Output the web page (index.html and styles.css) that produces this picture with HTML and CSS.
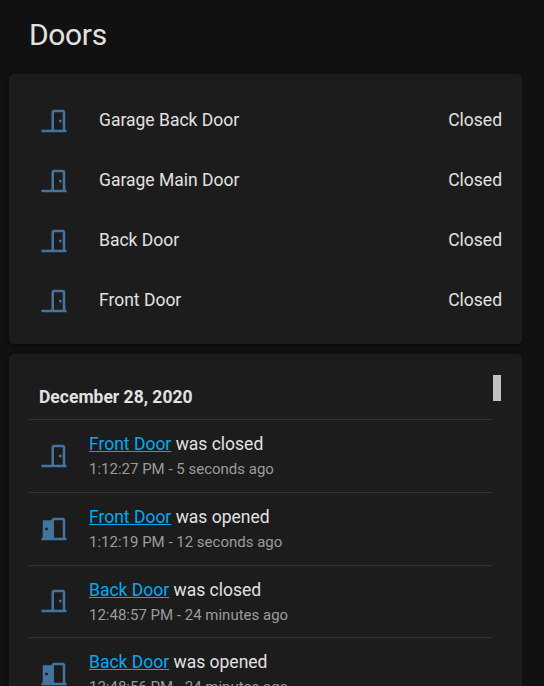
FILE: index.html
```html
<!DOCTYPE html>
<html lang="en">
<head>
<meta charset="utf-8">
<title>Doors</title>
<link rel="stylesheet" href="styles.css">
</head>
<body>
<svg class="sprite" aria-hidden="true">
  <symbol id="door-closed" viewBox="0 0 24 24"><path d="M16,11H18V13H16V11M12,3H19C20.11,3 21,3.89 21,5V19H22V21H2V19H10V5C10,3.89 10.89,3 12,3M12,5V19H19V5H12Z"/></symbol>
  <symbol id="door-open" viewBox="0 0 24 24"><path d="M12,3C10.89,3 10,3.89 10,5H3V19H2V21H22V19H21V5C21,3.89 20.11,3 19,3H12M12,5H19V19H12V5M5,11H7V13H5V11Z"/></symbol>
</svg>
<main class="view">
  <h1 class="title">Doors</h1>
  <section class="card entities">
    <div class="row"><svg class="icon"><use href="#door-closed"/></svg><span class="name">Garage Back Door</span><span class="state">Closed</span></div>
    <div class="row"><svg class="icon"><use href="#door-closed"/></svg><span class="name">Garage Main Door</span><span class="state">Closed</span></div>
    <div class="row"><svg class="icon"><use href="#door-closed"/></svg><span class="name">Back Door</span><span class="state">Closed</span></div>
    <div class="row"><svg class="icon"><use href="#door-closed"/></svg><span class="name">Front Door</span><span class="state">Closed</span></div>
  </section>
  <section class="card logbook">
    <div class="log">
      <h2 class="date">December 28, 2020</h2>
      <div class="entry"><svg class="icon"><use href="#door-closed"/></svg><div class="message"><div class="event"><a class="link" href="#">Front Door</a> was closed</div><div class="time">1:12:27 PM - 5 seconds ago</div></div></div>
      <div class="entry"><svg class="icon"><use href="#door-open"/></svg><div class="message"><div class="event"><a class="link" href="#">Front Door</a> was opened</div><div class="time">1:12:19 PM - 12 seconds ago</div></div></div>
      <div class="entry"><svg class="icon"><use href="#door-closed"/></svg><div class="message"><div class="event"><a class="link" href="#">Back Door</a> was closed</div><div class="time">12:48:57 PM - 24 minutes ago</div></div></div>
      <div class="entry"><svg class="icon"><use href="#door-open"/></svg><div class="message"><div class="event"><a class="link" href="#">Back Door</a> was opened</div><div class="time">12:48:56 PM - 24 minutes ago</div></div></div>
    </div>
    <div class="thumb"></div>
  </section>
</main>
</body>
</html>
```
FILE: styles.css
```css
* {
  box-sizing: border-box;
}

body {
  margin: 0;
  height: 686px;
  overflow: hidden;
  background: #111111;
  color: #e1e1e1;
  font-family: Roboto, "Liberation Sans", sans-serif;
  font-size: 17.5px;
}

.sprite {
  display: none;
}

.view {
  height: 686px;
  overflow: hidden;
  padding: 0 22px 0 9px;
}

.title {
  height: 74px;
  margin: 0;
  padding: 10px 20px 0;
  font-size: 30px;
  font-weight: 400;
  line-height: 50px;
  letter-spacing: -0.36px;
}

.card {
  background: #1c1c1c;
  border-radius: 5px;
  box-shadow: 0 2px 2px rgba(0, 0, 0, 0.14), 0 1px 5px rgba(0, 0, 0, 0.12), 0 3px 1px -2px rgba(0, 0, 0, 0.2);
}

.entities {
  display: grid;
  gap: 10px;
  height: 270px;
  padding: 20px;
}

.row {
  display: flex;
  align-items: center;
  padding-left: 10px;
}

.icon {
  flex: none;
  width: 30px;
  height: 30px;
  fill: #44739e;
}

.row .icon {
  margin-top: 4px;
}

.name,
.state {
  padding-top: 2px;
}

.name {
  flex: 1;
  margin-left: 30px;
}

.logbook {
  display: flex;
  height: 440px;
  margin-top: 10px;
  padding: 20px 20px 0;
}

.log {
  flex: 1;
}

.date {
  height: 45px;
  margin: 0;
  padding: 11px 10px 0;
  font-size: 17.5px;
  font-weight: 700;
  line-height: 25px;
}

.entry {
  display: flex;
  align-items: center;
  height: 72.75px;
  padding-left: 10px;
  border-top: 1px solid #343434;
}

.message {
  margin-left: 20px;
  padding-top: 2.4px;
}

.event {
  line-height: 25px;
}

.link {
  color: #03a9f4;
}

.time {
  color: #9b9b9b;
  font-size: 15px;
  line-height: 25px;
}

.thumb {
  width: 8px;
  height: 26px;
  margin: 1px 1px 0;
  background: #c1c1c1;
}
```
